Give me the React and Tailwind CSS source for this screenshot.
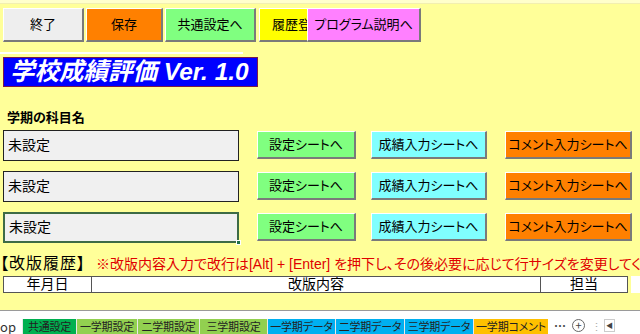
import React from "react";

const font = "font-['Liberation_Sans','Noto_Sans_CJK_JP',sans-serif] [font-feature-settings:'palt']";
const bevel = "border-t border-l border-t-white border-l-white border-b-2 border-r-2 border-b-[#7a7a7a] border-r-[#7a7a7a]";

const TopButton = ({ label, className }) => (
  <div
    className={`h-[34px] flex items-center justify-center text-[13px] text-black ${bevel} ${className}`}
  >
    {label}
  </div>
);

const RowButton = ({ label, className }) => (
  <div
    className={`h-[28px] flex items-center justify-center text-[13px] text-black whitespace-nowrap ${bevel} ${className}`}
  >
    {label}
  </div>
);

const SubjectRow = ({ selected }) => (
  <div className="flex items-start h-[31px]">
    <div
      className={`relative ml-[3px] w-[236px] h-[31px] bg-[#f0f0f0] flex items-center pl-[4px] text-[14px] text-black ${
        selected ? "border-2 border-[#3d6b45]" : "border-[1.5px] border-[#222]"
      }`}
    >
      未設定
      {selected && (
        <div className="absolute right-[-4px] bottom-[-4px] w-[5px] h-[5px] bg-[#217346] border border-white" />
      )}
    </div>
    <div className="flex pt-[1px]">
      <RowButton label="設定シートへ" className="ml-[18px] w-[99px] bg-[#80ff80]" />
      <RowButton label="成績入力シートへ" className="ml-[15px] w-[116px] bg-[#80ffff]" />
      <RowButton label="コメント入力シートへ" className="ml-[18px] w-[127px] bg-[#ff8000]" />
    </div>
  </div>
);

const tabs = [
  { label: "共通設定", w: "w-[54px]", bg: "bg-[#00b050]" },
  { label: "一学期設定", w: "w-[61px]", bg: "bg-[#92d050]" },
  { label: "二学期設定", w: "w-[62px]", bg: "bg-[#92d050]" },
  { label: "三学期設定", w: "w-[68px]", bg: "bg-[#92d050]" },
  { label: "一学期データ", w: "w-[68px]", bg: "bg-[#00b0f0]" },
  { label: "二学期データ", w: "w-[69px]", bg: "bg-[#00b0f0]" },
  { label: "三学期データ", w: "w-[69px]", bg: "bg-[#00b0f0]" },
  { label: "一学期コメント", w: "w-[75px]", bg: "bg-[#ffc000]" },
];

const App = () => {
  return (
    <div className={`w-[640px] h-[334px] bg-[#ffff99] overflow-hidden flex flex-col ${font}`}>
      {/* top strip */}
      <div className="h-[4px] bg-[#ffffcc] border-b border-[#f2efb0]" />

      {/* command buttons */}
      <div className="flex items-start mt-[4px] pl-[3px]">
        <TopButton label="終了" className="w-[81px] bg-[#eeeeee]" />
        <TopButton label="保存" className="ml-[2px] w-[77px] bg-[#ff8000]" />
        <TopButton label="共通設定へ" className="ml-[2px] w-[91px] bg-[#80ff80]" />
        <div
          className={`ml-[3px] w-[48px] h-[34px] bg-[#ffff00] overflow-hidden flex items-center pl-[12px] text-[13px] whitespace-nowrap border-t border-l border-t-white border-l-white border-b-2 border-b-[#7a7a7a]`}
        >
          履歴登録
        </div>
        <TopButton label="プログラム説明へ" className="w-[114px] bg-[#ff80ff]" />
      </div>

      <div className="mt-[10px] h-[2px] w-[243px] bg-white" />

      {/* title */}
      <div className="mt-[3px] ml-[3px] w-[255px] h-[30px] bg-[#0000ff] border-[1.5px] border-[#7a1a4a] flex items-center pl-[6px]">
        <span className="text-white text-[24.5px] font-bold italic leading-none whitespace-nowrap">
          学校成績評価 Ver. 1.0
        </span>
      </div>

      <div className="mt-[21px] ml-[7px] h-[20px] leading-[20px] text-[13px] font-bold text-black">
        学期の科目名
      </div>

      <div className="mt-[2px] flex flex-col gap-[10px]">
        <SubjectRow />
        <SubjectRow />
        <SubjectRow selected />
      </div>

      {/* revision history */}
      <div className="mt-[10px] h-[22px] flex items-center whitespace-nowrap">
        <span className="text-[16px] text-black tracking-[1px]">【改版履歴】</span>
        <span className="ml-[10px] text-[14px] text-[#e00000]">
          ※改版内容入力で改行は[Alt] + [Enter] を押下し、その後必要に応じて行サイズを変更してください。
        </span>
      </div>
      <div className="mt-[1px] flex">
        <div className="ml-[3px] w-[625px] h-[17px] bg-white border border-[#555] flex text-[14px] text-black leading-[15px]">
          <div className="w-[88px] text-center border-r border-[#555]">年月日</div>
          <div className="flex-1 text-center border-r border-[#555]">改版内容</div>
          <div className="w-[86px] text-center">担当</div>
        </div>
        <div className="ml-[3px] w-[9px] h-[17px] bg-white" />
      </div>

      <div className="flex-1" />

      {/* sheet tabs */}
      <div className="h-[1px] bg-[#9a9a9a]" />
      <div className="h-[23px] bg-white flex items-end">
        <div className="flex items-stretch h-[15px] text-[11px] leading-[15px] text-[#222] font-['Noto_Sans_CJK_JP',sans-serif]">
          <div className="w-[22px] bg-white text-[13px] text-[#333]">op</div>
          {tabs.map((t) => (
            <div
              key={t.label}
              className={`${t.w} ${t.bg} border-l border-[#e8e8e8] text-center whitespace-nowrap overflow-hidden tracking-[-0.2px]`}
            >
              {t.label}
            </div>
          ))}
          <div className="ml-[6px] w-[14px] text-[#444] text-[12px] font-bold leading-[13px]">…</div>
          <div className="ml-[4px] w-[13px] h-[13px] rounded-full border border-[#666] flex items-center justify-center text-[11px] leading-none text-[#444]">
            +
          </div>
          <div className="ml-[6px] w-[6px] text-[#aaa] text-[11px] leading-[14px]">⋮</div>
          <div className="ml-[7px] w-[11px] h-[13px] border border-[#ccc] flex items-center justify-center text-[7px] text-[#444]">
            ◀
          </div>
          <div className="w-[22px] bg-white" />
        </div>
      </div>
    </div>
  );
};

export default App;
